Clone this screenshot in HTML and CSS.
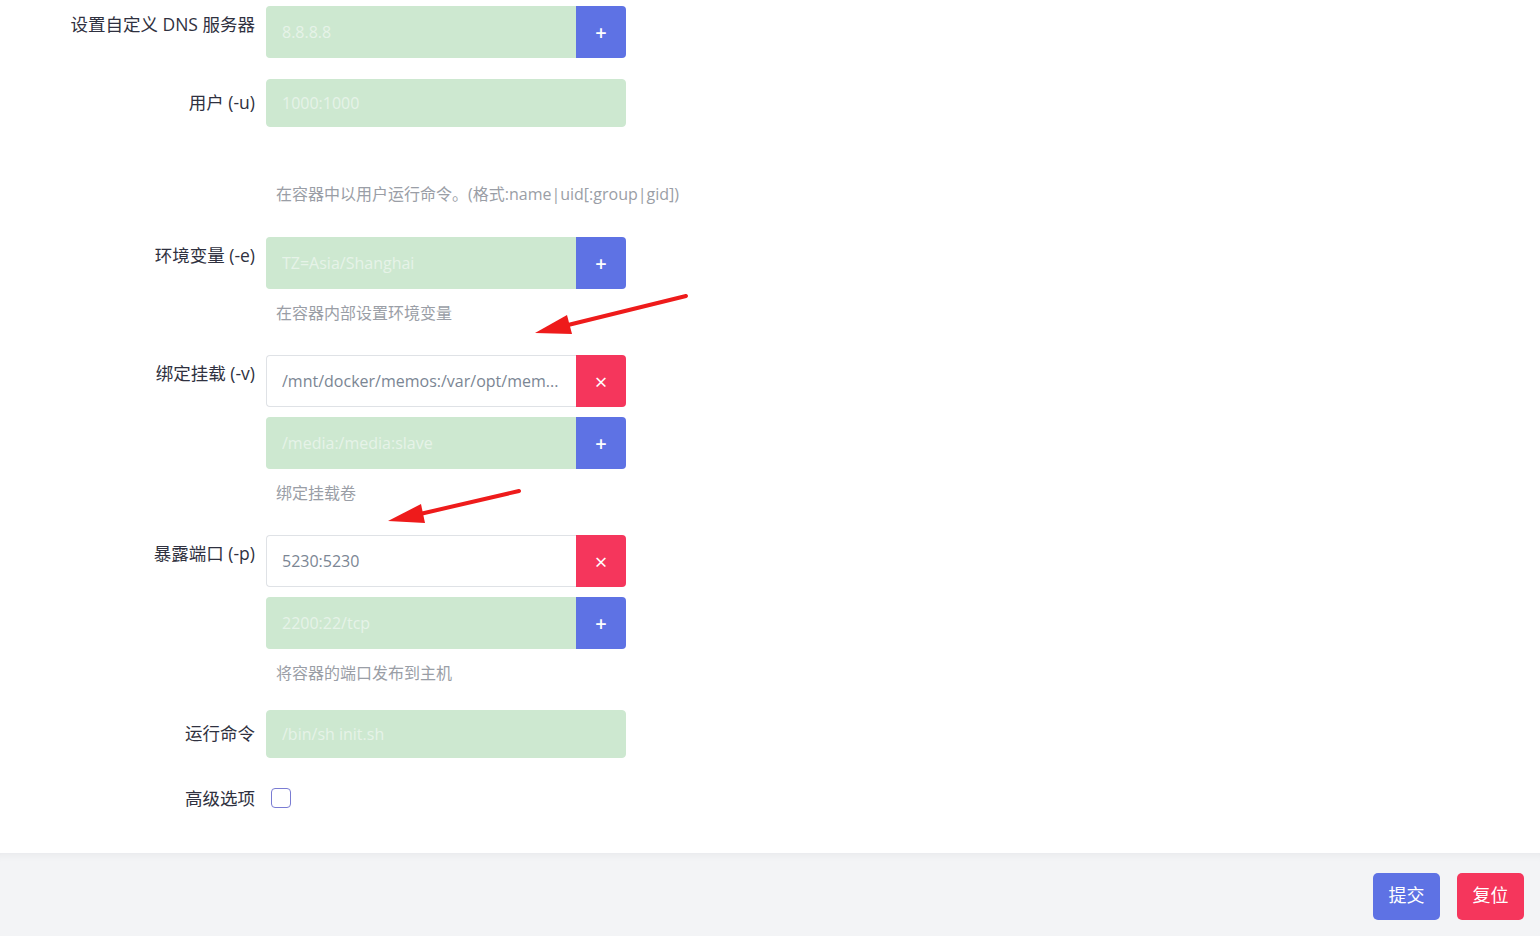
FILE: index.html
```html
<!DOCTYPE html>
<html lang="zh-CN">

<head>
  <meta charset="UTF-8">
  <meta name="viewport" content="width=device-width, initial-scale=1.0">
  <title>容器设置</title>
  <link rel="stylesheet" href="styles.css">
</head>

<body>

  <form class="form" onsubmit="return false">

    <div class="row row-dns">
      <label class="label label-group">设置自定义 DNS 服务器</label>
      <div class="field">
        <div class="group">
          <input class="input input-empty" type="text" placeholder="8.8.8.8">
          <button class="btn-add" type="button">+</button>
        </div>
      </div>
    </div>

    <div class="row row-user">
      <label class="label label-plain">用户 (-u)</label>
      <div class="field">
        <input class="input input-empty input-plain" type="text" placeholder="1000:1000">
        <div class="help help-far">在容器中以用户运行命令。(格式:name|uid[:group|gid])</div>
      </div>
    </div>

    <div class="row row-env">
      <label class="label label-group">环境变量 (-e)</label>
      <div class="field">
        <div class="group">
          <input class="input input-empty" type="text" placeholder="TZ=Asia/Shanghai">
          <button class="btn-add" type="button">+</button>
        </div>
        <div class="help">在容器内部设置环境变量</div>
      </div>
    </div>

    <div class="row row-volume">
      <label class="label label-group">绑定挂载 (-v)</label>
      <div class="field">
        <div class="group">
          <input class="input" type="text" value="/mnt/docker/memos:/var/opt/mem...">
          <button class="btn-remove" type="button">&times;</button>
        </div>
        <div class="group">
          <input class="input input-empty" type="text" placeholder="/media:/media:slave">
          <button class="btn-add" type="button">+</button>
        </div>
        <div class="help">绑定挂载卷</div>
      </div>
    </div>

    <div class="row row-port">
      <label class="label label-group">暴露端口 (-p)</label>
      <div class="field">
        <div class="group">
          <input class="input" type="text" value="5230:5230">
          <button class="btn-remove" type="button">&times;</button>
        </div>
        <div class="group">
          <input class="input input-empty" type="text" placeholder="2200:22/tcp">
          <button class="btn-add" type="button">+</button>
        </div>
        <div class="help">将容器的端口发布到主机</div>
      </div>
    </div>

    <div class="row row-cmd">
      <label class="label label-plain">运行命令</label>
      <div class="field">
        <input class="input input-empty input-plain" type="text" placeholder="/bin/sh init.sh">
      </div>
    </div>

    <div class="row row-advanced">
      <label class="label label-check">高级选项</label>
      <div class="field">
        <input class="check" type="checkbox">
      </div>
    </div>

  </form>

  <!-- annotation arrows drawn over the screenshot -->
  <svg class="marks" width="1540" height="936" viewBox="0 0 1540 936">
    <line x1="686" y1="296" x2="568" y2="325" stroke="#ee1b1b" stroke-width="4" stroke-linecap="round" />
    <polygon points="535,333 572,334 567,315" fill="#ee1b1b" />
    <line x1="519" y1="491" x2="420" y2="514" stroke="#ee1b1b" stroke-width="4" stroke-linecap="round" />
    <polygon points="388,521 425,523 421,504" fill="#ee1b1b" />
  </svg>

  <div class="footer">
    <button class="btn btn-submit" type="button">提交</button>
    <button class="btn btn-reset" type="button">复位</button>
  </div>

</body>

</html>
```

FILE: styles.css
```css
body {
  margin: 0;
  min-height: 100vh;
  display: flex;
  flex-direction: column;
  background-color: #fff;
  font-family: 'Open Sans', 'Noto Sans CJK SC', sans-serif;
  color: #32325d;
}

.form {
  padding-top: 6px;
}

.row {
  display: flex;
  align-items: flex-start;
}

.row-dns {
  margin-bottom: 21px;
}

.row-user {
  margin-bottom: 33px;
}

.row-env,
.row-volume {
  margin-bottom: 32px;
}

.row-port {
  margin-bottom: 27px;
}

.row-cmd {
  margin-bottom: 28px;
}

.label {
  width: 255px;
  flex-shrink: 0;
  text-align: right;
  font-size: 17.5px;
  line-height: 24px;
  color: #2f3140;
  white-space: nowrap;
}

.label-group {
  padding-top: 6px;
}

.label-plain {
  padding-top: 11px;
}

.field {
  width: 360px;
  margin-left: 11px;
  display: flex;
  flex-direction: column;
  gap: 10px;
}

.group {
  display: flex;
  height: 52px;
}

.input {
  flex: 1;
  min-width: 0;
  box-sizing: border-box;
  height: 100%;
  padding: 0 16px 0 15px;
  font-family: 'Open Sans', 'Noto Sans CJK SC', sans-serif;
  font-size: 16px;
  color: #7b8694;
  background-color: #fff;
  border: 1px solid #dfe2e6;
  border-right: none;
  border-radius: 4px 0 0 4px;
  outline: none;
  text-overflow: ellipsis;
}

.input-empty {
  background-color: #cde8d0;
  border-color: #cde8d0;
}

.input-empty::placeholder {
  color: #e6f3e8;
}

.input-plain {
  flex: none;
  width: 360px;
  height: 48px;
  border-radius: 4px;
  border-right: 1px solid #cde8d0;
}

.btn-add,
.btn-remove {
  width: 50px;
  height: 100%;
  border: none;
  border-radius: 0 4px 4px 0;
  color: #fff;
  font-family: 'Open Sans', sans-serif;
  font-size: 20px;
  font-weight: 600;
  padding: 0;
  cursor: pointer;
}

.btn-add {
  background-color: #5e72e4;
}

.btn-remove {
  background-color: #f5365c;
  font-size: 22px;
  font-weight: 400;
}

.help {
  margin-top: 4px;
  padding-left: 10px;
  font-size: 16px;
  line-height: 20px;
  color: #9a9ea6;
  white-space: nowrap;
}

.help-far {
  margin-top: 47px;
}

.label-check {
  line-height: 24px;
}

.check {
  appearance: none;
  margin: 2px 0 0 5px;
  width: 20px;
  height: 20px;
  border: 1px solid #7a7cd3;
  border-radius: 4px;
  background-color: #fff;
  cursor: pointer;
}

.marks {
  position: absolute;
  left: 0;
  top: 0;
  pointer-events: none;
}

.footer {
  margin-top: auto;
  height: 83px;
  box-sizing: border-box;
  padding: 19px 16px 0 0;
  display: flex;
  justify-content: flex-end;
  align-items: flex-start;
  gap: 17px;
  background-color: #f3f4f6;
  border-top: 1px solid #ebecef;
  box-shadow: inset 0 8px 10px -8px rgba(0, 0, 0, 0.06);
}

.btn {
  width: 67px;
  height: 47px;
  padding: 0 0 5px;
  border: none;
  border-radius: 5px;
  color: #fff;
  font-family: 'Noto Sans CJK SC', sans-serif;
  font-size: 18px;
  line-height: 1;
  cursor: pointer;
}

.btn-submit {
  background-color: #5e72e4;
}

.btn-reset {
  background-color: #f5365c;
}
```
